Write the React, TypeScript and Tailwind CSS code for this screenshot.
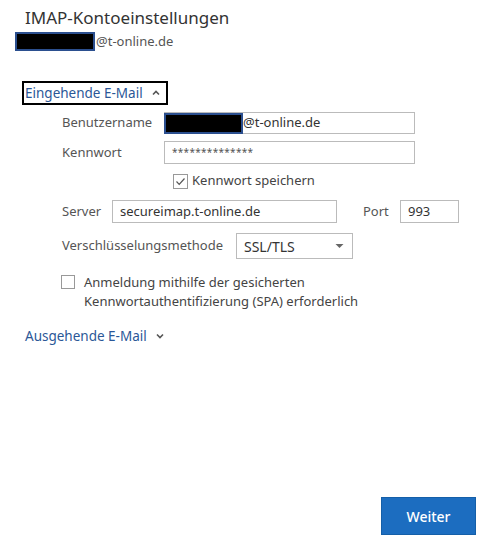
import React from "react";

const font = { fontFamily: '"Segoe UI", "Noto Sans", "Open Sans", sans-serif' };

export default function App() {
  return (
    <div className="w-[487px] h-[548px] bg-white relative overflow-hidden text-[#444]" style={font}>
      <div className="pl-[25px] pt-[6px] text-[17px] leading-[24px] text-[#333]">IMAP-Kontoeinstellungen</div>
      <div className="flex items-center pl-[15px] mt-[2px] h-[19px]">
        <div className="w-[80px] h-[19px] bg-black border-2 border-[#2b4f8f]"></div>
        <span className="text-[13px] text-[#555] ml-[1px]">@t-online.de</span>
      </div>
      <div className="ml-[22px] mt-[30px] w-[146px] h-[24px] border-2 border-black flex items-center pl-[1px]">
        <span className="text-[13.5px] text-[#2b5797]">Eingehende E-Mail</span>
        <svg width="10" height="10" viewBox="0 0 10 10" className="ml-[8px]">
          <path d="M2 6.5 L5 3.5 L8 6.5" fill="none" stroke="#555" strokeWidth="1.6" />
        </svg>
      </div>

      <div className="ml-[62px] mt-[7px] grid grid-cols-[102px_251px] gap-y-[7px] items-center">
        <span className="text-[13px] text-[#555]">Benutzername</span>
        <div className="h-[22px] border border-[#bbb] flex items-center">
          <div className="w-[79px] h-[21px] bg-black border-2 border-[#2b4f8f] -ml-[1px]"></div>
          <span className="text-[13px] text-[#333]">@t-online.de</span>
        </div>
        <span className="text-[13px] text-[#555]">Kennwort</span>
        <div className="h-[23px] border border-[#bbb] flex items-center pl-[7px]">
          <span className="text-[10px] text-[#555] tracking-[0.3px]">**************</span>
        </div>
      </div>

      <div className="flex items-center ml-[173px] mt-[9px] h-[16px]">
        <div className="w-[15px] h-[15px] border border-[#999] flex items-center justify-center">
          <svg width="11" height="11" viewBox="0 0 11 11">
            <path d="M1.5 5.5 L4.2 8.3 L9.5 2.5" fill="none" stroke="#555" strokeWidth="1.2" />
          </svg>
        </div>
        <span className="text-[13px] text-[#444] ml-[4px]">Kennwort speichern</span>
      </div>

      <div className="flex items-center ml-[62px] mt-[11px] h-[23px]">
        <span className="text-[13px] text-[#555] w-[50px]">Server</span>
        <div className="w-[225px] h-[23px] border border-[#bbb] flex items-center pl-[7px] text-[13px] text-[#333]">secureimap.t-online.de</div>
        <span className="text-[13px] text-[#555] ml-[26px] w-[37px]">Port</span>
        <div className="w-[59px] h-[23px] border border-[#bbb] flex items-center pl-[7px] text-[13px] text-[#333]">993</div>
      </div>

      <div className="flex items-center ml-[62px] mt-[10px] h-[26px]">
        <span className="text-[13px] text-[#555] w-[174px]">Verschlüsselungsmethode</span>
        <div className="w-[117px] h-[26px] border border-[#bbb] flex items-center pl-[7px] pr-[8px] justify-between">
          <span className="text-[14px] text-[#333]">SSL/TLS</span>
          <svg width="9" height="6" viewBox="0 0 9 6"><path d="M0.5 1 L8.5 1 L4.5 5 Z" fill="#666" /></svg>
        </div>
      </div>

      <div className="flex items-start ml-[61px] mt-[14px]">
        <div className="w-[14px] h-[14px] border border-[#999] mt-[2px] shrink-0"></div>
        <span className="text-[13px] leading-[19px] text-[#444] ml-[9px]">
          Anmeldung mithilfe der gesicherten<br />Kennwortauthentifizierung (SPA) erforderlich
        </span>
      </div>

      <div className="flex items-center ml-[25px] mt-[15px] h-[20px]">
        <span className="text-[13.5px] text-[#2b5797]">Ausgehende E-Mail</span>
        <svg width="10" height="10" viewBox="0 0 10 10" className="ml-[8px]">
          <path d="M2 3.5 L5 6.5 L8 3.5" fill="none" stroke="#555" strokeWidth="1.6" />
        </svg>
      </div>

      <button className="absolute left-[381px] top-[497px] w-[95px] h-[38px] bg-[#1c6dc0] border border-[#155fa8] text-white text-[14px] font-medium">Weiter</button>
    </div>
  );
}
